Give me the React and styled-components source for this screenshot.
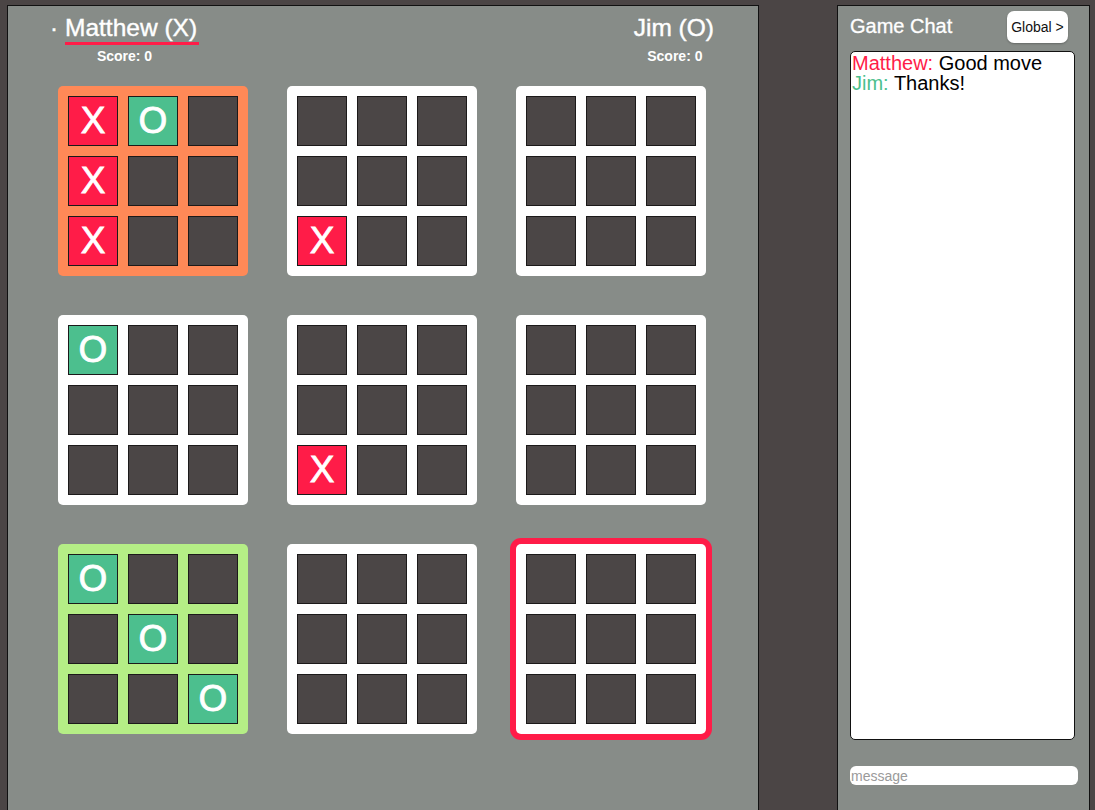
import React from "react";
import { styled, createGlobalStyle } from "styled-components";

const GlobalStyle = createGlobalStyle`
  html, body {
    margin: 0;
    padding: 0;
    background: #4b4545;
    overflow: hidden;
    font-family: "Liberation Sans", Arial, sans-serif;
  }
`;

const boards = [
  { tone: "orange", cells: ["X", "O", "", "X", "", "", "X", "", ""] },
  { cells: ["", "", "", "", "", "", "X", "", ""] },
  { cells: ["", "", "", "", "", "", "", "", ""] },
  { cells: ["O", "", "", "", "", "", "", "", ""] },
  { cells: ["", "", "", "", "", "", "X", "", ""] },
  { cells: ["", "", "", "", "", "", "", "", ""] },
  { tone: "green", cells: ["O", "", "", "", "O", "", "", "", "O"] },
  { cells: ["", "", "", "", "", "", "", "", ""] },
  { active: true, cells: ["", "", "", "", "", "", "", "", ""] },
];

const messages = [
  { from: "Matthew", color: "#ff1c48", text: "Good move" },
  { from: "Jim", color: "#4cbf8e", text: "Thanks!" },
];

function App() {
  return (
    <>
      <GlobalStyle />
      <Page>
        <GamePanel>
          <Header>
            <Player>
              <NameRow>
                <TurnDot>·</TurnDot>
                <Name $current>Matthew (X)</Name>
              </NameRow>
              <Score>Score: 0</Score>
            </Player>
            <Player>
              <NameRow>
                <Name>Jim (O)</Name>
              </NameRow>
              <Score>Score: 0</Score>
            </Player>
          </Header>
          <BoardGrid>
            {boards.map((b, i) => (
              <Board key={i} $tone={b.tone} $active={b.active}>
                {b.cells.map((c, j) => (
                  <Cell key={j} $mark={c}>
                    {c}
                  </Cell>
                ))}
              </Board>
            ))}
          </BoardGrid>
        </GamePanel>
        <ChatPanel>
          <ChatHeader>
            <ChatTitle>Game Chat</ChatTitle>
            <ChannelButton>Global &gt;</ChannelButton>
          </ChatHeader>
          <ChatLog>
            {messages.map((m, i) => (
              <Message key={i}>
                <Sender $color={m.color}>{m.from}:</Sender> {m.text}
              </Message>
            ))}
          </ChatLog>
          <MessageInput placeholder="message" />
        </ChatPanel>
      </Page>
    </>
  );
}

const Page = styled.div`
  display: flex;
  align-items: flex-start;
  gap: 78px;
  padding: 5px 0 0 7px;
`;

const GamePanel = styled.div`
  width: 752px;
  height: 830px;
  box-sizing: border-box;
  background: #878c88;
  border: 1px solid #111;
  padding: 0 42px;
`;

const Header = styled.div`
  display: flex;
  justify-content: space-between;
  align-items: flex-start;
  padding-top: 8px;
  color: #fff;
`;

const Player = styled.div`
  display: flex;
  flex-direction: column;
  align-items: center;
`;

const NameRow = styled.div`
  display: flex;
  align-items: center;
`;

const TurnDot = styled.span`
  font-size: 24px;
  line-height: 28px;
  margin-right: 7px;
  margin-bottom: 3px;
  -webkit-text-stroke: 0.4px #fff;
`;

const Name = styled.span`
  font-size: 24.5px;
  line-height: 28px;
  border-bottom: 3px solid ${(p) => (p.$current ? "#ff1c48" : "transparent")};
  padding-right: 2px;
  -webkit-text-stroke: 0.4px #fff;
`;

const Score = styled.div`
  margin-top: 3px;
  font-size: 14px;
  font-weight: bold;
  line-height: 16px;
`;

const BoardGrid = styled.div`
  display: grid;
  grid-template-columns: repeat(3, 190px);
  grid-auto-rows: 190px;
  gap: 39px;
  margin-top: 22px;
  padding-left: 8px;
`;

const boardColors = {
  orange: "#ff8957",
  green: "#b5ee86",
};

const Board = styled.div`
  display: grid;
  grid-template-columns: repeat(3, 50px);
  grid-auto-rows: 50px;
  gap: 10px;
  padding: 10px;
  border-radius: 5px;
  background: ${(p) => boardColors[p.$tone] || "#fff"};
  box-shadow: ${(p) => (p.$active ? "0 0 0 6px #ff1c48" : "none")};
`;

const cellColors = {
  X: "#ff1c48",
  O: "#4cbf8e",
};

const Cell = styled.div`
  box-sizing: border-box;
  border: 1px solid #1c1a1a;
  background: ${(p) => cellColors[p.$mark] || "#4b4646"};
  color: #fff;
  font-size: 37px;
  -webkit-text-stroke: 0.8px #fff;
  display: flex;
  align-items: center;
  justify-content: center;
`;

const ChatPanel = styled.div`
  width: 253px;
  height: 830px;
  box-sizing: border-box;
  background: #878c88;
  border: 1px solid #111;
  padding: 5px 0 0 12px;
  display: flex;
  flex-direction: column;
`;

const ChatHeader = styled.div`
  display: flex;
  justify-content: space-between;
  align-items: center;
  padding-right: 21px;
`;

const ChatTitle = styled.div`
  color: #fff;
  font-size: 20px;
  margin-top: -2px;
  -webkit-text-stroke: 0.3px #fff;
`;

const ChannelButton = styled.button`
  width: 61px;
  height: 32px;
  padding: 0;
  border: none;
  border-radius: 7px;
  background: #fff;
  color: #111;
  font-family: "Liberation Sans", Arial, sans-serif;
  font-size: 14px;
  box-shadow: 0 1px 2px rgba(0, 0, 0, 0.25);
`;

const ChatLog = styled.div`
  margin-top: 8px;
  width: 225px;
  height: 689px;
  box-sizing: border-box;
  background: #fff;
  border: 1px solid #111;
  border-radius: 5px;
  padding: 1px;
  font-size: 20px;
  line-height: 20px;
  color: #000;
`;

const Message = styled.div``;

const Sender = styled.span`
  color: ${(p) => p.$color};
`;

const MessageInput = styled.input`
  margin-top: 26px;
  width: 228px;
  height: 19px;
  box-sizing: border-box;
  border: none;
  border-radius: 6px;
  background: #fff;
  padding: 0 1px;
  font-family: "Liberation Sans", Arial, sans-serif;
  font-size: 14px;
  outline: none;
  &::placeholder {
    color: #9a9a9a;
  }
`;

export default App;
